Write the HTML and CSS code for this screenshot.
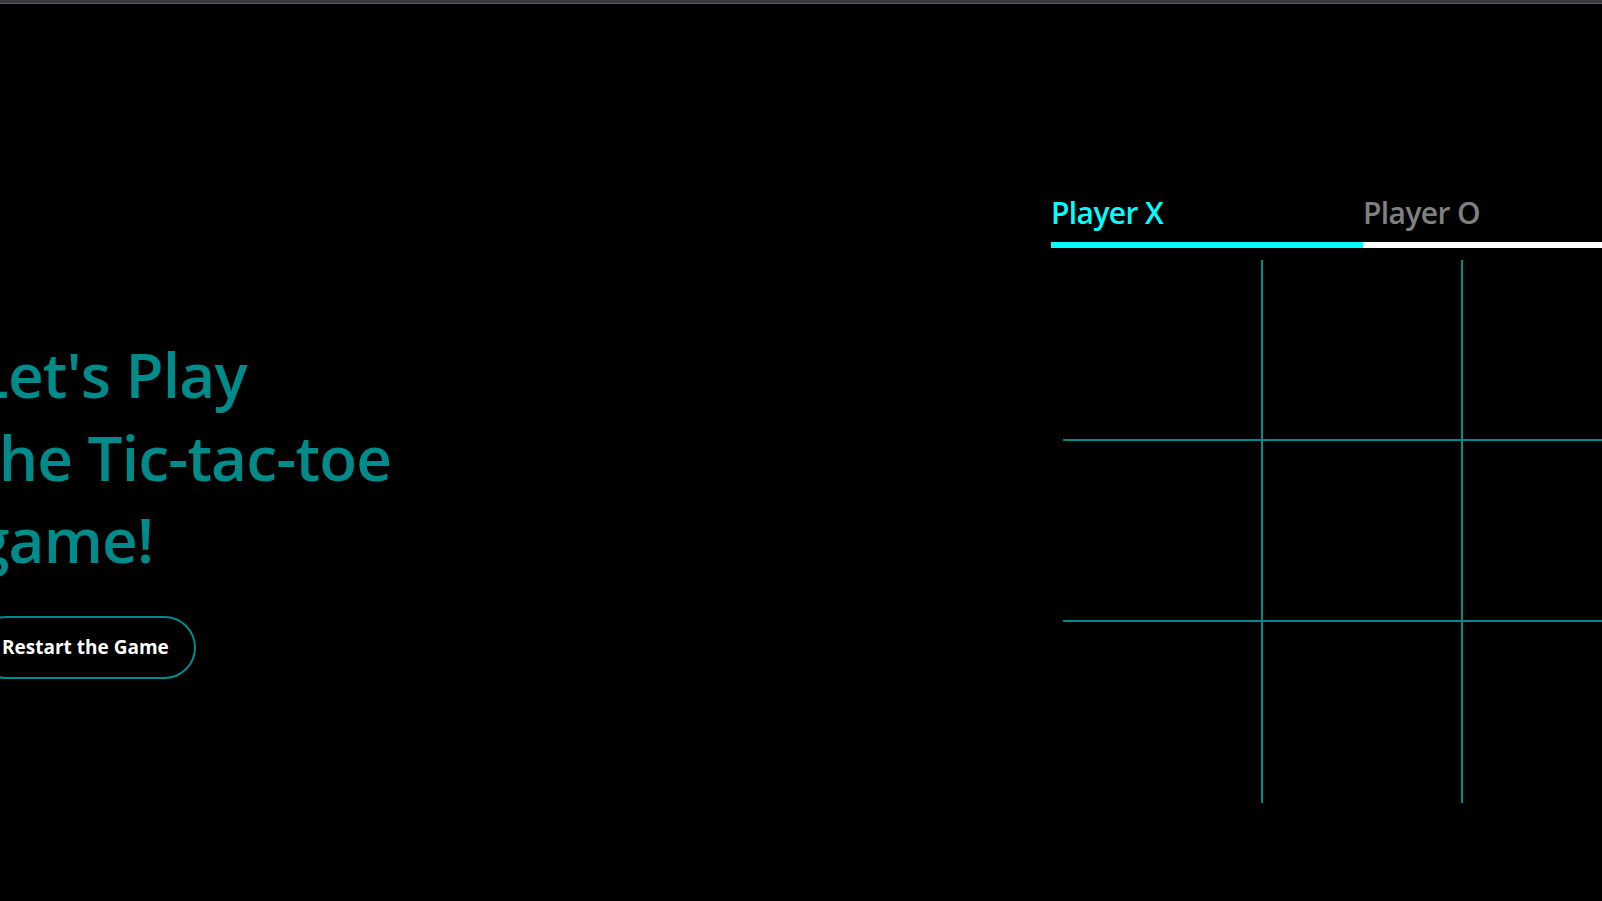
FILE: index.html
```html
<!DOCTYPE html>
<html lang="en">
<head>
<meta charset="utf-8">
<title>Tic-tac-toe</title>
<link rel="stylesheet" href="styles.css">
</head>
<body>
<div class="topbar"></div>
<main class="page">
  <section class="intro">
    <h1 class="title">Let's Play<br>the Tic-tac-toe<br>game!</h1>
    <button class="restart" type="button">Restart the Game</button>
  </section>
  <section class="game">
    <div class="tabs">
      <div class="tab tab-active">Player X</div>
      <div class="tab">Player O</div>
    </div>
    <div class="board">
      <div class="cell"></div><div class="cell"></div><div class="cell"></div>
      <div class="cell"></div><div class="cell"></div><div class="cell"></div>
      <div class="cell"></div><div class="cell"></div><div class="cell"></div>
    </div>
  </section>
</main>
</body>
</html>
```

FILE: styles.css
```css
* { box-sizing: border-box; }

html, body {
  margin: 0;
  padding: 0;
  background: #000;
  overflow: hidden;
  height: 100%;
}

body {
  font-family: "Open Sans", "Noto Sans", sans-serif;
  color: #fff;
}

.topbar {
  height: 4px;
  background: #3b3b3e;
  border-bottom: 1px solid #5a5a5c;
}

.page {
  display: flex;
  justify-content: center;
  align-items: flex-start;
  padding-top: 187px;
}

.intro {
  flex: none;
  width: 1124px;
  padding-left: 48px;
  margin-top: 142px;
}

.title {
  margin: 0;
  font-size: 62px;
  line-height: 82.5px;
  font-weight: 600;
  letter-spacing: -0.8px;
  color: #008b8b;
  white-space: nowrap;
}

.restart {
  margin-top: 35px;
  display: inline-block;
  padding: 16px 25px;
  border: 2px solid #008b8b;
  border-radius: 40px;
  background: transparent;
  color: #fff;
  font-family: "Open Sans", "Noto Sans", sans-serif;
  font-size: 19px;
  font-weight: 700;
  line-height: 27px;
}

.game {
  flex: none;
  width: 624px;
}

.tabs {
  display: flex;
}

.tab {
  flex: 1;
  font-size: 30px;
  line-height: 44px;
  font-weight: 600;
  letter-spacing: -0.6px;
  padding-bottom: 7px;
  color: #808080;
  border-bottom: 6px solid #fff;
}

.tab-active {
  color: #00ffff;
  border-bottom-color: #00ffff;
}

.board {
  width: 600px;
  margin: 12px auto 0;
  display: grid;
  grid-template-columns: repeat(3, 200px);
  grid-template-rows: repeat(3, 181px);
}

.cell {
  border-right: 2px solid #008b8b;
  border-bottom: 2px solid #008b8b;
}

.cell:nth-child(3n) { border-right: none; }
.cell:nth-child(n+7) { border-bottom: none; }
```
